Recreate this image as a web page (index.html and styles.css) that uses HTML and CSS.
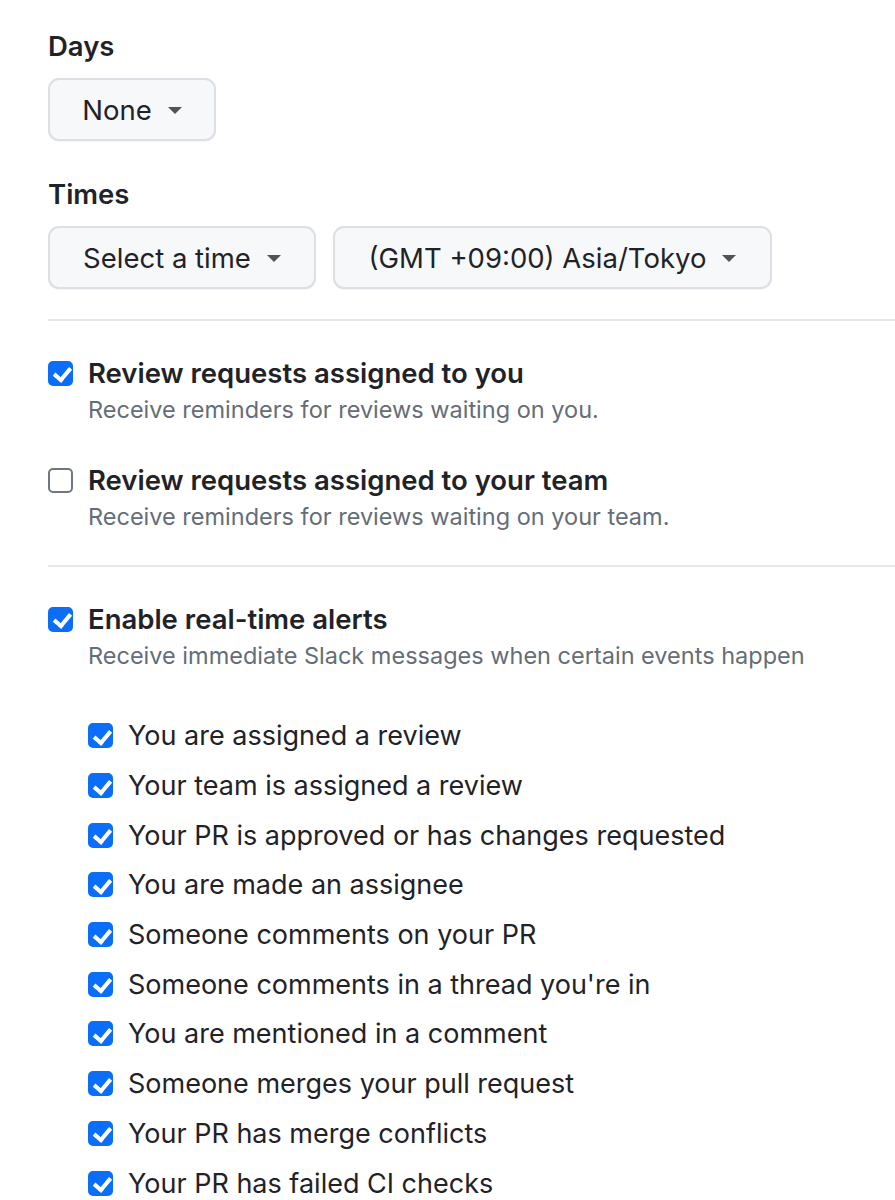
FILE: index.html
```html
<!DOCTYPE html>
<html>
<head>
<meta charset="utf-8">
<link rel="stylesheet" href="styles.css">
</head>
<body>
<div class="page">
  <div class="field">
    <div class="field-label">Days</div>
    <div class="btn-row">
      <button class="btn btn-days">None <span class="caret"></span></button>
    </div>
  </div>
  <div class="field field-times">
    <div class="field-label">Times</div>
    <div class="btn-row">
      <button class="btn btn-time">Select a time <span class="caret"></span></button>
      <button class="btn btn-tz">(GMT +09:00) Asia/Tokyo <span class="caret"></span></button>
    </div>
  </div>
  <hr class="divider divider-1">
  <div class="option option-1">
    <span class="cb checked"></span>
    <div class="option-body">
      <div class="option-title">Review requests assigned to you</div>
      <div class="option-note">Receive reminders for reviews waiting on you.</div>
    </div>
  </div>
  <div class="option option-2">
    <span class="cb"></span>
    <div class="option-body">
      <div class="option-title">Review requests assigned to your team</div>
      <div class="option-note">Receive reminders for reviews waiting on your team.</div>
    </div>
  </div>
  <hr class="divider divider-2">
  <div class="option option-3">
    <span class="cb checked"></span>
    <div class="option-body">
      <div class="option-title">Enable real-time alerts</div>
      <div class="option-note">Receive immediate Slack messages when certain events happen</div>
    </div>
  </div>
  <ul class="alerts">
    <li><span class="cb checked"></span>You are assigned a review</li>
    <li><span class="cb checked"></span>Your team is assigned a review</li>
    <li><span class="cb checked"></span>Your PR is approved or has changes requested</li>
    <li><span class="cb checked"></span>You are made an assignee</li>
    <li><span class="cb checked"></span>Someone comments on your PR</li>
    <li><span class="cb checked"></span>Someone comments in a thread you're in</li>
    <li><span class="cb checked"></span>You are mentioned in a comment</li>
    <li><span class="cb checked"></span>Someone merges your pull request</li>
    <li><span class="cb checked"></span>Your PR has merge conflicts</li>
    <li><span class="cb checked"></span>Your PR has failed CI checks</li>
  </ul>
</div>
</body>
</html>
```
FILE: styles.css
```css
* { box-sizing: border-box; }
html, body { margin: 0; padding: 0; background: #fff; }
body {
  font-family: Inter, "Noto Sans", "Liberation Sans", sans-serif;
  color: #1f2328;
  overflow: hidden;
}
.page {
  padding: 29px 0 0 48px;
}
.field-label {
  font-weight: 600;
  font-size: 27.5px;
  line-height: 34px;
  margin-bottom: 15px;
}
.field-times { margin-top: 36px; }
.btn-row { display: flex; gap: 17px; }
.btn {
  font-family: inherit;
  font-size: 27.5px;
  color: #1f2328;
  background: #f6f8fa;
  border: 2px solid #dcdfe3;
  border-radius: 11px;
  height: 63px;
  display: flex;
  align-items: center;
  justify-content: center;
  gap: 16px;
  padding: 0 20px;
  box-shadow: 0 1px 0 rgba(31,35,40,0.04);
}
.btn-days { width: 168px; }
.btn-time { width: 268px; }
.btn-tz { width: 439px; }
.caret {
  width: 0; height: 0;
  border-left: 7.5px solid transparent;
  border-right: 7.5px solid transparent;
  border-top: 7px solid #505459;
  margin-top: 2px;
}
.divider {
  border: 0;
  border-top: 2px solid #e6e8eb;
  margin: 30px 0 0 0;
}
.option {
  display: flex;
  gap: 15px;
}
.option-1 { margin-top: 35px; }
.option-2 { margin-top: 39px; }
.option-3 { margin-top: 35px; }
.divider-2 { margin-top: 34px; }
.option-title {
  font-weight: 600;
  font-size: 27.5px;
  line-height: 34px;
}
.option-note {
  font-size: 23.5px;
  color: #656d76;
  line-height: 28px;
  margin-top: 6px;
}
.cb {
  flex: none;
  width: 25px;
  height: 25px;
  border-radius: 5px;
  border: 2px solid #6e7781;
  background: #fff;
  margin-top: 4.5px;
  position: relative;
}
.cb.checked {
  background: #0b6ef9;
  border-color: #0b6ef9;
}
.cb.checked::after {
  content: "";
  position: absolute;
  left: 7px;
  top: 1.5px;
  width: 6.5px;
  height: 13px;
  border-right: 4px solid #fff;
  border-bottom: 4px solid #fff;
  transform: rotate(40deg);
}
.alerts {
  list-style: none;
  margin: 41px 0 0 40px;
  padding: 0;
}
.alerts li {
  display: flex;
  align-items: center;
  gap: 15px;
  height: 49.7px;
  font-size: 27px;
}
.alerts li .cb { margin-top: 0; }
```
